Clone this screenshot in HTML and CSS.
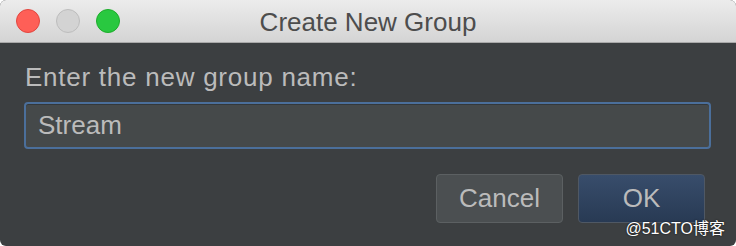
FILE: index.html
```html
<!DOCTYPE html>
<html lang="en">
<head>
    <meta charset="UTF-8">
    <title>Create New Group</title>
    <link rel="stylesheet" href="styles.css">
</head>
<body>
    <div class="window">
        <div class="titlebar">
            <div class="lights">
                <span class="light close"></span>
                <span class="light minimize"></span>
                <span class="light zoom"></span>
            </div>
            <div class="title">Create New Group</div>
            <div></div>
        </div>

        <div class="content">
            <label for="name" class="label">Enter the new group name:</label>
            <input type="text" id="name" class="field" value="Stream">

            <div class="actions">
                <button class="btn">Cancel</button>
                <button class="btn btn-default">OK</button>
            </div>
        </div>

        <div class="watermark">@51CTO博客</div>
    </div>
</body>
</html>
```

FILE: styles.css
```css
html, body {
    margin: 0;
    padding: 0;
    background: #ffffff;
}
body {
    width: 736px;
    height: 246px;
    overflow: hidden;
    font-family: "Liberation Sans", Arial, sans-serif;
}
.window {
    position: relative;
    height: 246px;
    background: #3c3f41;
    border-radius: 6px;
    overflow: hidden;
}
.titlebar {
    height: 42px;
    display: grid;
    grid-template-columns: 1fr auto 1fr;
    align-items: center;
    background: linear-gradient(#ececec, #d4d4d4);
    border-bottom: 1px solid #a9a9a9;
}
.lights {
    display: flex;
    gap: 16px;
    padding-left: 16px;
}
.light {
    width: 22px;
    height: 22px;
    border-radius: 50%;
    border: 1px solid transparent;
}
.close {
    background: #fe5f57;
    border-color: #e2463f;
}
.minimize {
    background: #d3d3d3;
    border-color: #bdbdbd;
}
.zoom {
    background: #29c840;
    border-color: #1dad2b;
}
.title {
    font-size: 26px;
    color: #4d4d4d;
    line-height: 30px;
    padding-top: 1px;
}
.content {
    padding: 19px 25px 0 24px;
    display: flex;
    flex-direction: column;
}
.label {
    font-size: 26px;
    line-height: 30px;
    color: #bbbbbb;
    letter-spacing: 0.75px;
    margin-bottom: 10px;
    margin-left: 1px;
}
.field {
    box-sizing: border-box;
    height: 47px;
    width: 100%;
    margin: 0;
    padding: 0 12px;
    font-family: inherit;
    font-size: 26px;
    color: #bbbbbb;
    background: #45494a;
    border: 2px solid #4b6f9b;
    border-radius: 4px;
    box-shadow: inset 0 1px 0 #34383a;
    outline: none;
}
.actions {
    display: flex;
    justify-content: flex-end;
    gap: 15px;
    margin-top: 25px;
    padding-right: 6px;
}
.btn {
    box-sizing: border-box;
    width: 127px;
    height: 49px;
    font-family: inherit;
    font-size: 26px;
    color: #bbbbbb;
    background: #4b4f51;
    border: 1px solid #5c6062;
    border-radius: 4px;
    padding: 0;
}
.btn-default {
    background: linear-gradient(#384d6b, #283a54);
    border-color: #4f5864;
}
.watermark {
    position: absolute;
    right: 11px;
    bottom: 7px;
    font-family: "Liberation Sans", "Noto Sans CJK SC", sans-serif;
    font-size: 16px;
    line-height: 20px;
    color: #ffffff;
    text-shadow: 0 0 2px #1e1e1e, 0 0 1px #1e1e1e;
}
```
